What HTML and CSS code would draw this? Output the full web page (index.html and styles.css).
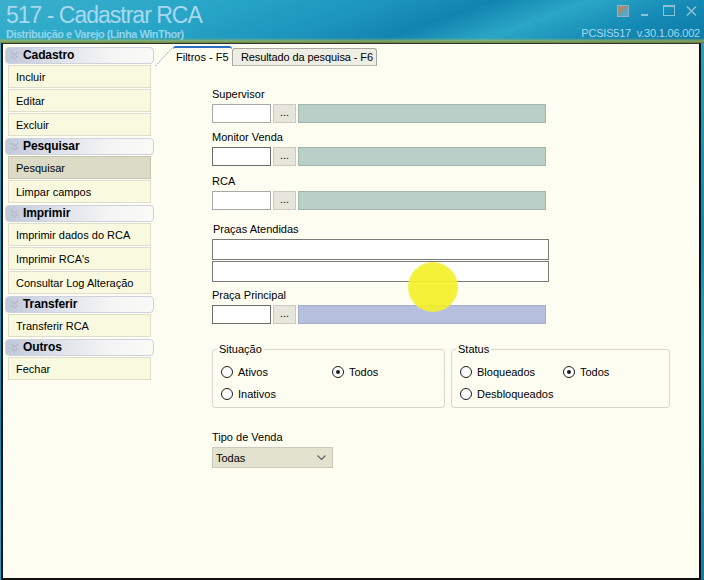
FILE: index.html
```html
<!DOCTYPE html>
<html lang="pt-BR">
<head>
<meta charset="utf-8">
<title>517 - Cadastrar RCA</title>
<link rel="stylesheet" href="styles.css">
</head>
<body>
<div class="app">
  <header class="titlebar">
    <div class="titles">
      <div class="title">517 - Cadastrar RCA</div>
      <div class="subtitle">Distribuição e Varejo (Linha WinThor)</div>
    </div>
    <div class="title-right">
      <div class="winbtns">
        <svg class="wb wb-skin" width="12" height="12" viewBox="0 0 12 12"><polygon points="0.5,0.5 11.5,0.5 0.5,11.5" fill="#a48c74"/><polygon points="11.5,0.5 11.5,11.5 0.5,11.5" fill="#5ea6c0"/><rect x="0.5" y="0.5" width="11" height="11" fill="none" stroke="#8ab4c8"/></svg>
        <svg class="wb wb-min" width="8" height="12" viewBox="0 0 8 12"><rect x="0" y="9" width="7" height="2" fill="#8cc2d6"/></svg>
        <svg class="wb wb-max" width="12" height="12" viewBox="0 0 12 12"><rect x="0.5" y="0.5" width="11" height="10" fill="none" stroke="#8cc2d6"/><rect x="0" y="0" width="12" height="2" fill="#8cc2d6"/></svg>
        <svg class="wb" width="11" height="12" viewBox="0 0 11 12"><path d="M1 1.5 L10 10.5 M10 1.5 L1 10.5" stroke="#8cc2d6" stroke-width="1.6"/></svg>
      </div>
      <div class="version">PCSIS517&nbsp; v.30.1.06.002</div>
    </div>
  </header>
  <div class="frame">
    <aside class="sidebar">
      <div class="grp-head"><svg class="chev" width="9" height="10" viewBox="0 0 9 10"><path d="M1 1 L4.5 4 L8 1 M1 5 L4.5 8 L8 5" fill="none" stroke="#b4b8c4" stroke-width="1.2"/></svg>Cadastro</div>
      <div class="item">Incluir</div>
      <div class="item">Editar</div>
      <div class="item">Excluir</div>
      <div class="grp-head"><svg class="chev" width="9" height="10" viewBox="0 0 9 10"><path d="M1 1 L4.5 4 L8 1 M1 5 L4.5 8 L8 5" fill="none" stroke="#b4b8c4" stroke-width="1.2"/></svg>Pesquisar</div>
      <div class="item selected">Pesquisar</div>
      <div class="item">Limpar campos</div>
      <div class="grp-head"><svg class="chev" width="9" height="10" viewBox="0 0 9 10"><path d="M1 1 L4.5 4 L8 1 M1 5 L4.5 8 L8 5" fill="none" stroke="#b4b8c4" stroke-width="1.2"/></svg>Imprimir</div>
      <div class="item">Imprimir dados do RCA</div>
      <div class="item">Imprimir RCA's</div>
      <div class="item">Consultar Log Alteração</div>
      <div class="grp-head"><svg class="chev" width="9" height="10" viewBox="0 0 9 10"><path d="M1 1 L4.5 4 L8 1 M1 5 L4.5 8 L8 5" fill="none" stroke="#b4b8c4" stroke-width="1.2"/></svg>Transferir</div>
      <div class="item">Transferir RCA</div>
      <div class="grp-head"><svg class="chev" width="9" height="10" viewBox="0 0 9 10"><path d="M1 1 L4.5 4 L8 1 M1 5 L4.5 8 L8 5" fill="none" stroke="#b4b8c4" stroke-width="1.2"/></svg>Outros</div>
      <div class="item">Fechar</div>
    </aside>
    <main class="main">
      <div class="tabs">
        <div class="tab active">
          <svg class="slant" width="18" height="19" viewBox="0 0 18 19"><path d="M0.5 19 L17.5 0.5" stroke="#8c9cb8" stroke-width="1" stroke-dasharray="1.5 1"/></svg>
          <span class="tab-label">Filtros - F5</span>
        </div>
        <div class="tab other"><span class="tab-label">Resultado da pesquisa - F6</span></div>
      </div>
      <div class="page">
        <div class="field f-sup">
          <div class="lbl">Supervisor</div>
          <div class="lookup"><span class="code"></span><span class="dots">...</span><span class="desc"></span></div>
        </div>
        <div class="field f-mon">
          <div class="lbl">Monitor Venda</div>
          <div class="lookup"><span class="code focus"></span><span class="dots">...</span><span class="desc"></span></div>
        </div>
        <div class="field f-rca">
          <div class="lbl">RCA</div>
          <div class="lookup"><span class="code"></span><span class="dots">...</span><span class="desc"></span></div>
        </div>
        <div class="field f-pra">
          <div class="lbl lbl-ind">Praças Atendidas</div>
          <div class="wide"></div>
          <div class="wide"></div>
        </div>
        <div class="field f-pp">
          <div class="lbl">Praça Principal</div>
          <div class="lookup"><span class="code focus"></span><span class="dots">...</span><span class="desc blue"></span></div>
        </div>
        <div class="groups">
          <fieldset class="grp g-sit">
            <legend>Situação</legend>
            <div class="radios">
              <div class="radio"><span class="circle"></span>Ativos</div>
              <div class="radio"><span class="circle on"></span>Todos</div>
              <div class="radio"><span class="circle"></span>Inativos</div>
            </div>
          </fieldset>
          <fieldset class="grp g-sta">
            <legend>Status</legend>
            <div class="radios">
              <div class="radio"><span class="circle"></span>Bloqueados</div>
              <div class="radio"><span class="circle on"></span>Todos</div>
              <div class="radio"><span class="circle"></span>Desbloqueados</div>
            </div>
          </fieldset>
        </div>
        <div class="field f-tipo">
          <div class="lbl">Tipo de Venda</div>
          <div class="select"><span>Todas</span><svg width="9" height="6" viewBox="0 0 9 6"><path d="M0.5 0.5 L4.5 4.5 L8.5 0.5" fill="none" stroke="#606060" stroke-width="1.1"/></svg></div>
        </div>
        <div class="cursor-hl"></div>
      </div>
    </main>
  </div>
</div>
</body>
</html>
```

FILE: styles.css
```css
* { box-sizing: border-box; }
html, body { margin: 0; padding: 0; }
body {
  width: 704px;
  height: 580px;
  overflow: hidden;
  font-family: "Liberation Sans", Arial, sans-serif;
  font-size: 11px;
  color: #000;
  background: linear-gradient(165deg, #38aeca 0%, #249cc0 35%, #1488b4 55%, #2aa4c4 70%, #0f7eaa 100%);
}
.app { display: flex; flex-direction: column; width: 704px; height: 580px; }

/* title bar */
.titlebar {
  height: 43px;
  display: flex;
  justify-content: space-between;
  background:
    linear-gradient(to bottom, transparent 38px, rgba(170,176,70,0.0) 38px, rgba(176,180,76,0.7) 41px, rgba(120,120,40,0.9) 43px),
    linear-gradient(160deg, #3ab0cc 0%, #26a4c6 30%, #1c94bc 48%, #1284b0 60%, #2aa6c6 72%, #1488b4 86%, #0e7aa6 100%);
}
.titles { padding: 2px 0 0 6px; }
.title {
  font-size: 23px;
  line-height: 26px;
  letter-spacing: -1px;
  color: #a8d8ef;
}
.subtitle {
  font-size: 11px;
  font-weight: bold;
  letter-spacing: -0.5px;
  color: #92d4ea;
  line-height: 13px;
}
.title-right {
  display: flex;
  flex-direction: column;
  align-items: flex-end;
  padding: 5px 4px 0 0;
}
.winbtns { display: flex; align-items: flex-start; padding-right: 3px; }
.winbtns .wb { display: block; }
.wb-skin { margin-right: 12px; }
.wb-min { margin-right: 14px; }
.wb-max { margin-right: 11px; }
.version {
  margin-top: 10px;
  color: #a6d9ef;
  font-size: 11px;
  line-height: 13px;
  letter-spacing: -0.2px;
}

/* frame */
.frame {
  flex: 1;
  margin: 0 3px 0 1px;
  border: 2px solid #101010;
  border-top: 1px solid #2a3a30;
  background: #fdfdf1;
  display: flex;
  min-height: 0;
}

/* sidebar */
.sidebar {
  width: 152px;
  padding: 3px 0 0 2px;
  display: flex;
  flex-direction: column;
}
.grp-head {
  width: 149px;
  height: 17px;
  margin-top: 1px;
  margin-bottom: 1px;
  border: 1px solid #cdd2dc;
  border-radius: 4px;
  background: linear-gradient(to right, #c0c8da 0%, #dde1ea 35%, #f4f4f4 70%, #fafaf8 100%);
  font-size: 12px;
  font-weight: bold;
  line-height: 15px;
  display: flex;
  align-items: center;
  padding-left: 4px;
  letter-spacing: -0.1px;
}
.grp-head:first-child { margin-top: 0; }
.chev { margin-right: 4px; flex: none; }
.item {
  width: 143px;
  height: 23px;
  margin: 0 0 1px 3px;
  border: 1px solid #dedece;
  background: #f9f9df;
  padding-left: 7px;
  display: flex;
  align-items: center;
}
.item.selected { background: #dcdcc6; border-color: #c4c4b0; }

/* main */
.main { flex: 1; display: flex; flex-direction: column; position: relative; }
.tabs { display: flex; align-items: flex-end; height: 21px; margin-top: 1px; }
.tab { display: flex; align-items: flex-end; height: 20px; }
.tab.active .slant { display: block; }
.tab.active .tab-label {
  height: 20px;
  border-top: 2px solid #2b6cc4;
  border-radius: 3px 3px 0 0;
  padding: 3px 4px 0 3px;
  width: 59px;
}
.tab.other { height: 18px; }
.tab.other .tab-label {
  height: 18px;
  border: 1px solid #a8a8a0;
  border-bottom: 1px solid #b8b8b0;
  border-radius: 3px 3px 0 0;
  background: #eeeee4;
  padding: 2px 0 0 8px;
  width: 145px;
  letter-spacing: -0.1px;
}
.tab-label { line-height: 13px; white-space: nowrap; }

.page { position: relative; padding: 22px 0 0 57px; flex: 1; }
.lbl { line-height: 13px; margin-bottom: 3px; }
.lbl-ind { padding-left: 1px; }
.f-mon { margin-top: 8px; }
.f-rca { margin-top: 9px; }
.f-pra { margin-top: 13px; }
.f-pp { margin-top: 7px; }
.f-tipo { margin-top: 23px; }

.lookup { display: flex; gap: 2px; height: 19px; }
.code { width: 59px; height: 19px; background: #fff; border: 1px solid #a8a8a8; }
.code.focus { border-color: #6c6c6c; }
.dots {
  width: 23px; height: 19px;
  background: #e6e6dc;
  border: 1px solid #cacac0;
  text-align: center;
  line-height: 15px;
  font-size: 11px;
}
.desc { width: 248px; height: 19px; background: #b8d0c8; border: 1px solid #a4b4ac; }
.desc.blue { background: #b6c0de; border-color: #a6aec8; }

.wide { width: 337px; height: 21px; background: #fff; border: 1px solid #7a7a7a; margin-bottom: 1px; }

.groups { display: flex; gap: 6px; margin-top: 19px; }
.grp {
  margin: 0;
  padding: 5px 0 2px 8px;
  border: 1px solid #d8d8d0;
  border-radius: 3px;
  min-width: 0;
}
.grp legend { padding: 0 2px; margin-left: -4px; line-height: 13px; }
.g-sit { width: 233px; }
.g-sta { width: 219px; }
.g-sit .radios { grid-template-columns: 111px 1fr; }
.g-sta .radios { grid-template-columns: 103px 1fr; }
.radios { display: grid; grid-auto-rows: 22px; }
.radio { display: flex; align-items: center; gap: 5px; white-space: nowrap; }
.circle {
  width: 12px; height: 12px;
  border: 1px solid #1c1c1c;
  border-radius: 50%;
  background: #fff;
  display: flex; align-items: center; justify-content: center;
  flex: none;
}
.circle.on::after {
  content: "";
  width: 4px; height: 4px;
  border-radius: 50%;
  background: #1c1c1c;
}

.select {
  width: 121px; height: 21px;
  background: #e2e2ce;
  border: 1px solid #cacabc;
  display: flex; align-items: center; justify-content: space-between;
  padding: 0 6px 0 3px;
}

.cursor-hl {
  position: absolute;
  left: 253px;
  top: 196px;
  width: 50px;
  height: 50px;
  border-radius: 50%;
  background: radial-gradient(circle, rgba(244,240,40,0.92) 60%, rgba(244,240,60,0.75) 85%, rgba(244,240,80,0.0) 100%);
  pointer-events: none;
}
```
